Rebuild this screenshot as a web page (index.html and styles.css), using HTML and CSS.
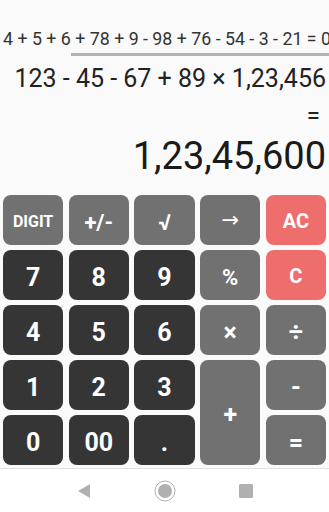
FILE: index.html
```html
<!DOCTYPE html>
<html>
<head>
<meta charset="utf-8">
<link rel="stylesheet" href="styles.css">
</head>
<body>
<div class="display">
  <div class="history"><span>1 + 2 + 3 + 4 + 5 + 6 + 78 + 9 - 98 + 76 - 54 - 3 - 21 = 0</span></div>
  <div class="scroll"></div>
  <div class="expr">123 - 45 - 67 + 89 × 1,23,456</div>
  <div class="eq">=</div>
  <div class="result">1,23,45,600</div>
</div>
<div class="keypad">
  <div class="key fn small">DIGIT</div>
  <div class="key fn">+/-</div>
  <div class="key fn">√</div>
  <div class="key fn arrow">→</div>
  <div class="key red">AC</div>

  <div class="key num">7</div>
  <div class="key num">8</div>
  <div class="key num">9</div>
  <div class="key fn">%</div>
  <div class="key red">C</div>

  <div class="key num">4</div>
  <div class="key num">5</div>
  <div class="key num">6</div>
  <div class="key fn op">×</div>
  <div class="key fn op">÷</div>

  <div class="key num">1</div>
  <div class="key num">2</div>
  <div class="key num">3</div>
  <div class="key fn op plus">+</div>
  <div class="key fn op">-</div>

  <div class="key num">0</div>
  <div class="key num">00</div>
  <div class="key num dot">.</div>
  <div class="key fn op">=</div>
</div>
<div class="navbar">
  <svg class="nav-ic" width="16" height="16" viewBox="0 0 16 16"><path d="M14 1 L14 15 L2 8 Z" fill="#b0b0b0"/></svg>
  <svg class="nav-ic" width="22" height="22" viewBox="0 0 22 22"><circle cx="11" cy="11" r="10" fill="none" stroke="#b0b0b0" stroke-width="1"/><circle cx="11" cy="11" r="7" fill="#b0b0b0"/></svg>
  <svg class="nav-ic" width="16" height="16" viewBox="0 0 16 16"><rect x="1" y="1" width="14" height="14" rx="1.5" fill="#b0b0b0"/></svg>
</div>
</body>
</html>
```
FILE: styles.css
```css
html, body {
  margin: 0;
  padding: 0;
}
body {
  width: 329px;
  height: 512px;
  background: #fafafa;
  font-family: Roboto, "Noto Sans", sans-serif;
  overflow: hidden;
}
.display {
  height: 195px;
  display: flex;
  flex-direction: column;
}
.history {
  margin-top: 29px;
  height: 20px;
  line-height: 20px;
  font-size: 17.8px;
  color: #333;
  white-space: nowrap;
  overflow: hidden;
  display: flex;
  justify-content: flex-end;
}
.history span {
  flex: none;
  margin-right: -2px;
}
.scroll {
  margin-top: 4px;
  margin-left: 71px;
  height: 3px;
  background: #b3b3b3;
}
.expr {
  margin-top: 8px;
  font-size: 25px;
  line-height: 30px;
  color: #222;
  text-align: right;
  padding-right: 3px;
  white-space: nowrap;
}
.eq {
  margin-top: 7px;
  font-size: 24px;
  line-height: 30px;
  color: #222;
  text-align: right;
  padding-right: 9px;
}
.result {
  margin-top: 3px;
  font-size: 38px;
  line-height: 45px;
  color: #1a1a1a;
  text-align: right;
  padding-right: 3px;
}
.keypad {
  display: grid;
  grid-template-columns: repeat(5, 1fr);
  grid-auto-rows: 50px;
  column-gap: 5.5px;
  row-gap: 5px;
  padding: 0 3px;
  height: 270px;
}
.key {
  border-radius: 8px;
  display: flex;
  align-items: center;
  justify-content: center;
  color: #fff;
  font-weight: 700;
  font-size: 23px;
  padding-top: 4px;
  box-sizing: border-box;
}
.num {
  background: #353535;
  font-size: 25px;
}
.fn {
  background: #717171;
  font-size: 22px;
}
.op {
  font-size: 25px;
}
.red {
  background: #ee6e6e;
  font-size: 20px;
  padding-top: 1px;
}
.small {
  font-size: 16px;
  padding-top: 2px;
}
.arrow {
  font-family: "DejaVu Sans", sans-serif;
  font-weight: 400;
  font-size: 21px;
  padding-top: 0;
}
.plus {
  grid-row: span 2;
}
.navbar {
  margin-top: 3px;
  height: 44px;
  background: #fff;
  border-top: 1px solid #e0e0e0;
  display: flex;
  align-items: center;
  justify-content: center;
  gap: 62px;
}
```
